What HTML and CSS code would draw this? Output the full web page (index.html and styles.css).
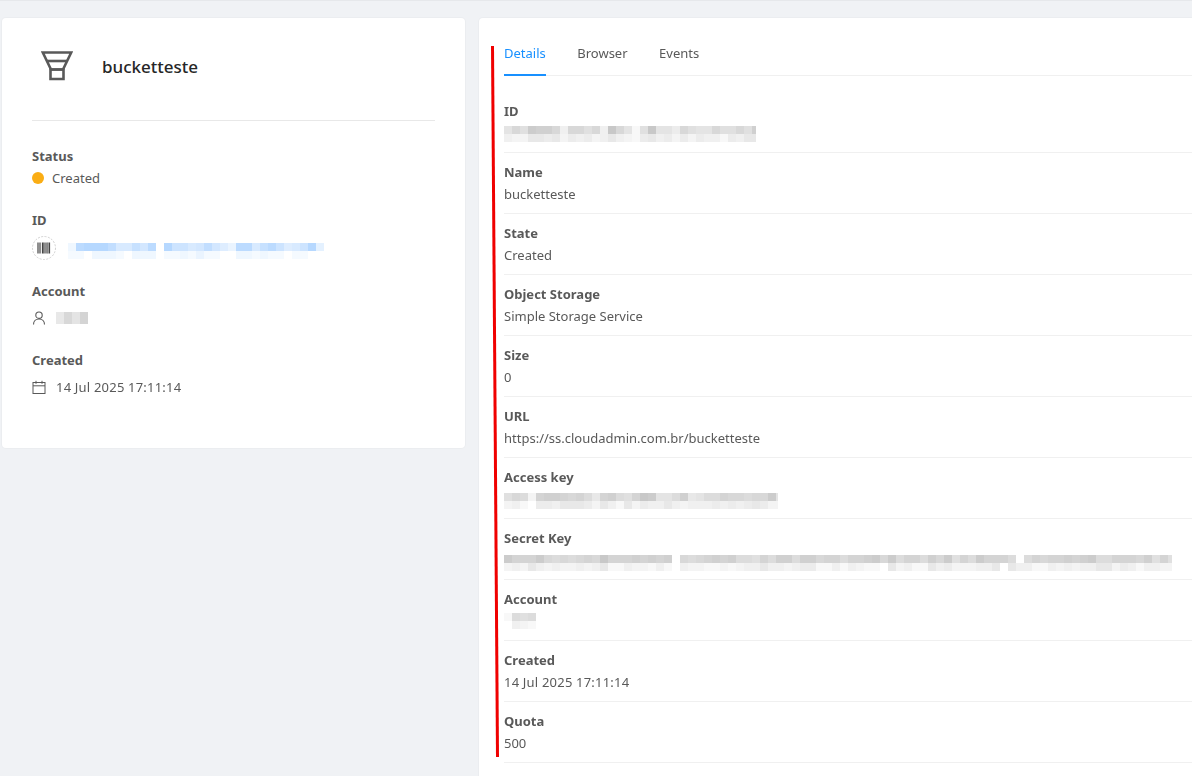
FILE: index.html
```html
<!DOCTYPE html>
<html lang="en">
<head>
<meta charset="utf-8">
<title>bucketteste</title>
<link rel="stylesheet" href="styles.css">
</head>
<body>
<main class="page">
  <section class="card info-card">
    <header class="info-head">
      <svg class="bucket-icon" width="32" height="30" viewBox="0 0 32 30" fill="none" stroke="#595959" stroke-width="2.6" stroke-linejoin="miter">
        <path d="M1.8 1.5H30.2L22 18.5H10Z"/>
        <path d="M6 10H26"/>
        <path d="M9.5 18.5H22.5V28H9.5Z"/>
      </svg>
      <h1 class="info-title">bucketteste</h1>
    </header>
    <hr class="info-rule">
    <div class="meta">
      <div class="meta-label">Status</div>
      <div class="meta-value"><span class="dot"></span>Created</div>
    </div>
    <div class="meta">
      <div class="meta-label">ID</div>
      <div class="meta-value meta-id">
        <svg class="barcode" width="24" height="24" viewBox="0 0 24 24" fill="none">
          <circle cx="12" cy="12" r="11.5" stroke="#d0d0d0" stroke-dasharray="2 1.4"/>
          <path d="M6 6.5V17.5M8 6.5V17.5M10.5 6.5V17.5M13 6.5V17.5M15 6.5V17.5M17.5 6.5V17.5" stroke="#444" stroke-width="1.2"/>
          <path d="M11.5 6.5V17.5M16.2 6.5V17.5" stroke="#777" stroke-width="1"/>
        </svg>
        <canvas class="blur blur-side-id" width="256" height="16" data-tint="blue"
          data-r1="d 4 3 3 3 5 9 9 6 8 4 f 3 7 7 9 8 5 8 a c 4 4 9 6 4 7 a 9 7 3 b"
          data-r2="e e f d d d e f d d d f e e d e c e e f f d d e d e e f e e f f"></canvas>
      </div>
    </div>
    <div class="meta">
      <div class="meta-label">Account</div>
      <div class="meta-value meta-gap">
        <svg class="line-icon" width="14" height="14" viewBox="0 0 14 14" fill="none" stroke="#595959" stroke-width="1.1">
          <circle cx="7" cy="4.2" r="3.2"/>
          <path d="M1.5 13.5C1.5 10 4 8 7 8S12.5 10 12.5 13.5"/>
        </svg>
        <canvas class="blur" width="32" height="12" data-r1="a 6 9 5"></canvas>
      </div>
    </div>
    <div class="meta">
      <div class="meta-label">Created</div>
      <div class="meta-value meta-gap date">
        <svg class="line-icon" width="14" height="14" viewBox="0 0 14 14" fill="none" stroke="#595959" stroke-width="1">
          <rect x="1" y="2.5" width="12" height="11"/>
          <path d="M1 5.8H13M4 .8V3.8M10 .8V3.8"/>
        </svg>
        14 Jul 2025 17:11:14
      </div>
    </div>
  </section>

  <section class="card detail-card">
    <nav class="tabs">
      <a class="tab tab-active">Details</a>
      <a class="tab">Browser</a>
      <a class="tab">Events</a>
    </nav>
    <dl class="rows">
      <div class="row">
        <dt>ID</dt>
        <dd><canvas class="blur blur-id" width="252" height="16"
          data-r1="9 6 8 3 4 4 6 c 6 6 8 6 c 2 6 9 e 8 2 9 9 b 6 8 9 9 6 8 8 6 8 4"
          data-r2="c d d a a b a d b c b d c a c d e b a c b d b d b c c e b c a a"></canvas></dd>
      </div>
      <div class="row"><dt>Name</dt><dd>bucketteste</dd></div>
      <div class="row"><dt>State</dt><dd>Created</dd></div>
      <div class="row"><dt>Object Storage</dt><dd>Simple Storage Service</dd></div>
      <div class="row"><dt>Size</dt><dd>0</dd></div>
      <div class="row"><dt>URL</dt><dd>https://ss.cloudadmin.com.br/bucketteste</dd></div>
      <div class="row">
        <dt>Access key</dt>
        <dd><canvas class="blur blur-access" width="274" height="16"
          data-r1="8 6 7 d 5 4 4 5 6 5 7 a 5 4 7 8 5 2 3 9 9 7 4 a 9 7 7 5 6 6 7 6 6 3 9"
          data-r2="d c e f b b c a a a b d a c e a d b c c a c d c c c b c b c b a b d d"></canvas></dd>
      </div>
      <div class="row">
        <dt>Secret Key</dt>
        <dd><canvas class="blur blur-secret" width="668" height="16"
          data-r1="3 5 5 5 3 6 7 6 7 6 5 6 2 5 5 5 4 5 4 5 4 f 6 7 6 5 4 5 4 7 7 8 5 7 4 4 7 4 4 6 5 5 7 5 5 4 3 6 3 7 5 5 7 4 6 3 8 5 7 3 5 5 5 7 f 7 5 6 5 5 4 5 4 3 7 7 5 5 5 6 4 8 5 8"
          data-r2="d c d a c d c d d c d c a e e c d d e c e f c d d e e d e d c c a c c d c b b e e c e c d e e f a d c e e a c b d d d c c a f a c c e e c d c d c c a a d b c e c c d d"></canvas></dd>
      </div>
      <div class="row">
        <dt>Account</dt>
        <dd><canvas class="blur blur-account" width="35" height="16" data-r1="e 7 8 7 f" data-r2="f c d e f"></canvas></dd>
      </div>
      <div class="row"><dt>Created</dt><dd class="date">14 Jul 2025 17:11:14</dd></div>
      <div class="row"><dt>Quota</dt><dd>500</dd></div>
    </dl>
  </section>
</main>
<svg class="annotation" width="10" height="714" viewBox="0 0 10 714">
  <path d="M1.5 1L6.5 712" stroke="#f00000" stroke-width="3" fill="none"/>
</svg>
<script src="blur.js"></script>
</body>
</html>
```
FILE: styles.css
```css
* { box-sizing: border-box; }
html, body { margin: 0; height: 100%; }
body {
  position: relative;
  overflow: hidden;
  background: #f0f2f5;
  border-top: 1px solid #e6e8eb;
  color: #595959;
  font-family: "Noto Sans", "Open Sans", sans-serif;
  font-size: 13px;
  line-height: 22px;
}
.page {
  display: flex;
  gap: 14px;
  width: 1400px;
  height: 1000px;
  padding: 17px 0 0 2px;
  align-items: flex-start;
}
.card {
  background: #fff;
  border-radius: 4px;
  box-shadow: 0 0 0 1px #ebedf0;
}
.info-card {
  flex: 0 0 463px;
  height: 430px;
  padding: 0 30px;
}
.info-head {
  display: flex;
  align-items: center;
  height: 102px;
  padding: 0 0 0 9px;
}
.bucket-icon { flex: none; margin: -6px 29px 0 0; }
.info-title {
  margin: -4px 0 0;
  color: #262626;
  font-size: 17px;
  font-weight: 500;
  line-height: 24px;
}
.info-rule {
  margin: 0 0 24px;
  border: 0;
  border-top: 1px solid #e8e8e8;
}
.meta { margin-bottom: 20px; }
.meta-label, dt { font-weight: 700; }
.meta-value { display: flex; align-items: center; min-height: 22px; }
.meta-gap { margin-top: 5px; }
.meta-id { margin-top: 5px; height: 24px; }
.date { letter-spacing: 0.2px; }
.dot {
  width: 12px;
  height: 12px;
  margin-right: 8px;
  border-radius: 50%;
  background: #faad14;
}
.line-icon { flex: none; margin-right: 10px; }
.barcode { flex: none; margin-right: 12px; }
.blur { display: block; }
.blur-side-id { margin-top: 6px; }
.detail-card {
  flex: 0 0 900px;
  height: 1000px;
  padding: 0 25px;
}
.tabs {
  display: flex;
  gap: 31.5px;
  height: 58px;
  border-bottom: 1px solid #f0f0f0;
  margin-bottom: 16px;
}
.tab {
  padding-top: 24px;
  height: 58px;
}
.tab-active {
  color: #1890ff;
  border-bottom: 2px solid #1890ff;
}
.rows { margin: 0; }
.row {
  padding: 8px 0;
  border-bottom: 1px solid #f0f0f0;
}
dt, dd { margin: 0; height: 22px; }
dd { display: flow-root; }
.blur-id { margin-top: 4px; }
.blur-access { margin-top: 5px; }
.blur-secret { margin-top: 6px; }
.blur-account { margin-top: 3px; }
.annotation {
  position: absolute;
  left: 491px;
  top: 44px;
}
```
FILE: blur.js
```js
// Draws the pixelated (redacted) values from rows of shade digits.
document.querySelectorAll('canvas.blur').forEach(function (canvas) {
  var ctx = canvas.getContext('2d');
  var blue = canvas.dataset.tint === 'blue';
  var block = 8;
  function shade(d) {
    var v = d === 'f' ? 255 : 192 + parseInt(d, 16) * 4;
    if (blue) {
      var k = (255 - v) / 63;
      return 'rgb(' + Math.round(255 - k * 90) + ',' + Math.round(255 - k * 48) + ',255)';
    }
    return 'rgb(' + v + ',' + v + ',' + v + ')';
  }
  function paint(row, y, h) {
    if (!row) return;
    var cells = row.replace(/\s+/g, '');
    for (var i = 0; i < cells.length; i++) {
      ctx.fillStyle = shade(cells[i]);
      ctx.fillRect(i * block, y, block, h);
    }
  }
  var single = !canvas.dataset.r2;
  paint(canvas.dataset.r1, 0, single ? canvas.height : 8);
  paint(canvas.dataset.r2, 8, 8);
});
```
